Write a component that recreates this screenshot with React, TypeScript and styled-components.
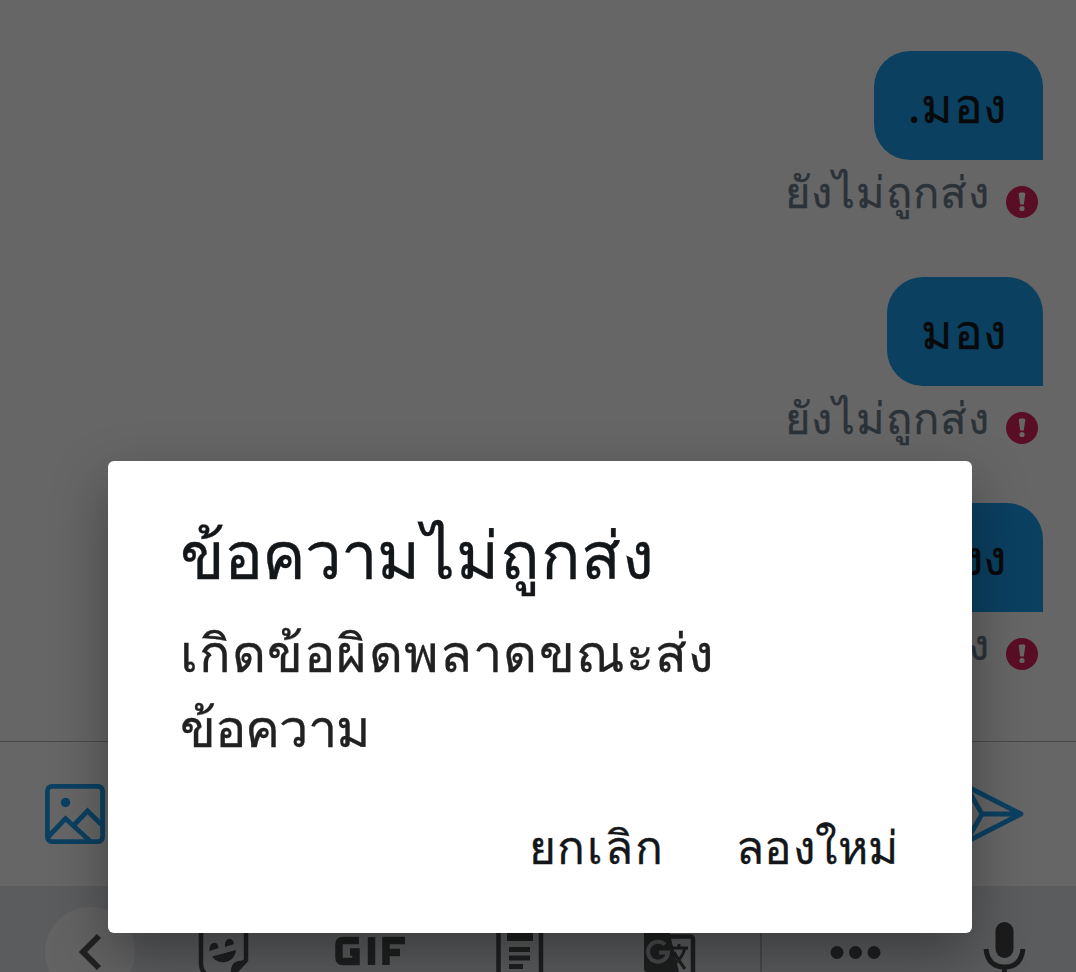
import React from "react";
import styled, { createGlobalStyle } from "styled-components";

const messages = [
  { id: 1, text: ".มอง", width: 169 },
  { id: 2, text: "มอง", width: 156.5 },
  { id: 3, text: "มองง", width: 181 },
];

const App = () => {
  return (
    <Screen>
      <GlobalStyle />
      <Conversation>
        {messages.map((message) => (
          <Message key={message.id}>
            <Bubble $width={message.width}>{message.text}</Bubble>
            <Status>
              <StatusText>ยังไม่ถูกส่ง</StatusText>
              <ErrorIcon />
            </Status>
          </Message>
        ))}
      </Conversation>
      <Composer>
        <ImageIcon />
        <SendIcon />
      </Composer>
      <Keyboard>
        <BackButton>
          <svg width="90" height="90" viewBox="0 0 90 90">
            <path d="M54 29 38 45l16 16" fill="none" stroke="#555" strokeWidth="6" />
          </svg>
        </BackButton>
        <KeyboardIcons />
      </Keyboard>
      <Scrim>
        <Dialog>
          <Title>
            <Spaced $spacing={-0.9}>ข้อความ</Spaced>
            <Spaced $spacing={0.8} $indent={3}>ไม่ถูกส่ง</Spaced>
          </Title>
          <Body>
            <Spaced $spacing={1.2}>เกิดข้อผิดพลาดขณะส่ง</Spaced>
            <br />
            <Spaced $spacing={-0.7}>ข้อความ</Spaced>
          </Body>
          <Actions>
            <Action $width={137} $spacing={1.8}>ยกเลิก</Action>
            <Action $width={164} $spacing={0.6}>ลองใหม่</Action>
          </Actions>
        </Dialog>
      </Scrim>
    </Screen>
  );
};

const ErrorIcon = () => (
  <svg width="32" height="32" viewBox="0 0 32 32">
    <circle cx="16" cy="16" r="16" fill="#e0245e" />
    <path d="M12.700 8q0-1.500 1.500-1.500h3.600q1.500 0 1.500 1.500l-1.500 10.500h-3.600z" fill="#fff" />
    <circle cx="16" cy="22.500" r="2.600" fill="#fff" />
  </svg>
);

const ImageIcon = () => (
  <svg width="60" height="60" viewBox="0 0 60 60" fill="none" stroke="#1da1f2" strokeWidth="4.800">
    <rect x="2.400" y="2.400" width="55.200" height="55.200" rx="4.500" />
    <path d="M3 53 20.500 34.500 45 57M29 41 42.500 27 58 42" />
    <circle cx="20.500" cy="18.500" r="4.700" fill="#1da1f2" stroke="none" />
  </svg>
);

const SendIcon = () => (
  <svg width="64" height="62" viewBox="0 0 64 62" fill="none" stroke="#1da1f2" strokeWidth="4.800" strokeLinejoin="round">
    <path d="M6 3 61 31 6 59l16-28zM22 31h39" />
  </svg>
);

// icons of the keyboard's suggestion strip, from the sticker button to the mic
const KeyboardIcons = () => (
  <svg width="941" height="86" viewBox="135 886 941 86" fill="none" stroke="#4c5050" strokeWidth="4.500">
    <path d="M201 965V928H246V960L234 973M201 964q0 6 4 9" />
    <path d="M231 974c-1-11 5-15 17-13l-12 13z" fill="#4c5050" stroke="none" />
    <path
      d="M209.500 951c-1-10 9-11 9-3zM225 947c-1-10 8-11 9-3zM212 956.500l24-6.500c-2 15-18 15-24 6.500z"
      fill="#4c5050"
      stroke="none"
    />
    <path
      d="M359 940.500H343q-4 0-4 4v13q0 4 4 4h13V952h-6M371.500 937v28M386 965V940.500h19M386 952.500h14"
      strokeWidth="7.500"
    />
    <path d="M498.500 972V926H541v46" />
    <path
      d="M507 926h26v15h-26zM509 947h21v5h-21zM509 955.500h21v5h-21zM509 964h14v5h-14z"
      fill="#4c5050"
      stroke="none"
    />
    <path d="M644 926h24l11 46h-32q-3 0-3-3z" fill="#4c5050" stroke="none" />
    <path d="M668 936.500h22q3 0 3 3v33" />
    <path d="M665 944.500a10 10 0 1 0 3 8h-9" stroke="#b7babf" strokeWidth="4" />
    <path d="M671 948h17M679 944v4M685 948q-3 12-14 18M674 952q4 8 11 17" strokeWidth="3" />
    <path d="M761 930v42" stroke="#b7babf" strokeWidth="2" />
    <g fill="#4c5050" stroke="none">
      <circle cx="837" cy="952.500" r="6.500" />
      <circle cx="855.500" cy="952.500" r="6.500" />
      <circle cx="874" cy="952.500" r="6.500" />
    </g>
    <rect x="995.500" y="922" width="18" height="36" rx="9" fill="#444" stroke="none" />
    <path d="M986 949q2 18 18.500 18t18.500-18M1004.500 967v8" stroke="#444" strokeWidth="5" />
  </svg>
);

const GlobalStyle = createGlobalStyle`
  body {
    margin: 0;
    background: #666;
  }
`;
const Screen = styled.div`
  position: relative;
  width: 1076px;
  height: 972px;
  overflow: hidden;
  display: flex;
  flex-direction: column;
  background: #fff;
  font-family: "Noto Sans", sans-serif;
  -webkit-text-stroke: 0.3px currentColor;
  svg {
    display: block;
    flex: none;
  }
`;
const Conversation = styled.div`
  box-sizing: border-box;
  height: 741px;
  padding: 51px 33px 0 0;
`;
const Message = styled.div`
  height: 226px;
  display: flex;
  flex-direction: column;
  align-items: flex-end;
`;
const Bubble = styled.div<{ $width: number }>`
  box-sizing: border-box;
  width: ${(props) => props.$width}px;
  height: 109px;
  padding-right: 36px;
  border-radius: 36px 36px 0 36px;
  background: #1da1f2;
  color: #14171a;
  font-size: 48px;
  letter-spacing: 0.6px;
  line-height: 107px;
  text-align: right;
  white-space: nowrap;
`;
const Status = styled.div`
  display: flex;
  align-items: flex-end;
  gap: 16px;
  height: 52px;
  margin-top: 6px;
  padding-right: 5px;
  color: #6c7e8d;
`;
const StatusText = styled.div`
  height: 52px;
  font-size: 43.5px;
  letter-spacing: 1px;
  line-height: 51px;
  white-space: nowrap;
`;
const Composer = styled.div`
  box-sizing: border-box;
  height: 145px;
  padding: 0 52px 0 45px;
  border-top: 1px solid #aab8c2;
  display: flex;
  align-items: center;
  justify-content: space-between;
`;
const Keyboard = styled.div`
  height: 86px;
  display: flex;
  padding-left: 45px;
  background: #e4e7eb;
`;
const BackButton = styled.div`
  width: 90px;
  height: 90px;
  flex: none;
  margin-top: 21px;
  border-radius: 50%;
  background: #f8f8f8;
`;
const Scrim = styled.div`
  position: absolute;
  inset: 0;
  display: flex;
  flex-direction: column;
  align-items: center;
  justify-content: flex-end;
  background: rgba(0, 0, 0, 0.6);
`;
const Dialog = styled.div`
  box-sizing: border-box;
  width: 864px;
  height: 472px;
  margin: 0 0 39px 3px;
  padding: 51px 72px 0;
  border-radius: 6px;
  background: #fff;
  color: #14171a;
  box-shadow: 0 22px 55px rgba(0, 0, 0, 0.35);
`;
const Spaced = styled.span<{ $spacing: number; $indent?: number }>`
  margin-left: ${(props) => props.$indent || 0}px;
  letter-spacing: ${(props) => props.$spacing}px;
`;
const Title = styled.div`
  height: 102px;
  font-size: 65.5px;
  line-height: 84px;
  white-space: nowrap;
`;
const Body = styled.div`
  height: 190px;
  font-size: 52.4px;
  line-height: 75px;
  color: #212121;
  white-space: nowrap;
`;
const Actions = styled.div`
  display: flex;
  justify-content: flex-end;
  gap: 70px;
`;
const Action = styled.div<{ $width: number; $spacing: number }>`
  width: ${(props) => props.$width}px;
  font-size: 46px;
  letter-spacing: ${(props) => props.$spacing}px;
  line-height: 85px;
  white-space: nowrap;
`;

export default App;
